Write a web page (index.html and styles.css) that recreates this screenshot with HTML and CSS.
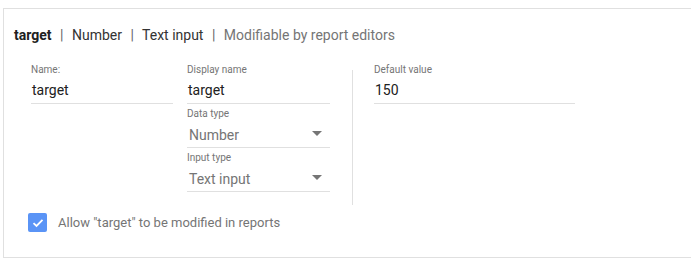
FILE: index.html
```html
<!DOCTYPE html>
<html lang="en">
  <head>
    <meta charset="UTF-8" />
    <meta name="viewport" content="width=device-width, initial-scale=1.0" />
    <title>Parameter</title>
    <link rel="stylesheet" href="styles.css">
  </head>
  <body>
    <div class="card">
      <div class="summary">
        <b>target</b>
        <span class="sep">|</span>
        <span>Number</span>
        <span class="sep">|</span>
        <span>Text input</span>
        <span class="sep">|</span>
        <span class="muted">Modifiable by report editors</span>
      </div>

      <div class="fields">
        <div class="col col-name">
          <div class="field">
            <div class="label">Name:</div>
            <div class="value">target</div>
          </div>
        </div>

        <div class="col col-display">
          <div class="field">
            <div class="label">Display name</div>
            <div class="value">target</div>
          </div>
          <div class="field">
            <div class="label">Data type</div>
            <div class="value select">Number<span class="arrow"></span></div>
          </div>
          <div class="field">
            <div class="label">Input type</div>
            <div class="value select">Text input<span class="arrow"></span></div>
          </div>
        </div>

        <div class="divider"></div>

        <div class="col col-default">
          <div class="field">
            <div class="label">Default value</div>
            <div class="value">150</div>
          </div>
        </div>
      </div>

      <label class="check">
        <span class="box">
          <svg width="12" height="10" viewBox="0 0 12 10">
            <path d="M1.5 5.2 L4.5 8 L10.5 1.8" fill="none" stroke="#fff" stroke-width="1.8" />
          </svg>
        </span>
        Allow "target" to be modified in reports
      </label>
    </div>
  </body>
</html>
```

FILE: styles.css
```css
* {
  margin: 0;
  padding: 0;
  box-sizing: border-box;
  font-family: Roboto, "Liberation Sans", Arial, sans-serif;
}
body {
  background: #fff;
  overflow: hidden;
}
.card {
  margin: 8px 0 0 3px;
  width: 720px;
  height: 250px;
  border: 1px solid #e0e0e0;
  border-right: none;
  padding: 17px 0 0 10px;
}
.summary {
  font-size: 14px;
  line-height: 18px;
  color: #333;
}
.summary b {
  color: #212121;
}
.summary .sep {
  color: #666;
  margin: 0 5px;
}
.summary .muted {
  color: #757575;
}
.fields {
  display: flex;
  margin-top: 20px;
  padding-left: 17px;
}
.col {
  display: flex;
  flex-direction: column;
  gap: 4px;
}
.col-name {
  width: 142px;
}
.col-display {
  width: 143px;
  margin-left: 14px;
}
.col-default {
  width: 201px;
}
.divider {
  width: 1px;
  background: #e0e0e0;
  margin: 6px 21px 0 22px;
  height: 135px;
}
.label {
  font-size: 10px;
  line-height: 12px;
  color: #757575;
}
.value {
  font-size: 14px;
  line-height: 20px;
  height: 28px;
  padding: 4px 0 0 1px;
  color: #212121;
  border-bottom: 1px solid #e0e0e0;
}
.select {
  color: #757575;
  display: flex;
  justify-content: space-between;
  padding: 5px 0 0 2px;
}
.arrow {
  width: 0;
  height: 0;
  border-left: 5px solid transparent;
  border-right: 5px solid transparent;
  border-top: 5px solid #757575;
  margin: 6px 8px 0 0;
}
.check {
  display: flex;
  align-items: center;
  gap: 11px;
  margin-top: 8px;
  margin-left: 14px;
  font-size: 13px;
  color: #757575;
}
.box {
  width: 19px;
  height: 19px;
  border-radius: 2px;
  background: #5a94f6;
  display: flex;
  align-items: center;
  justify-content: center;
}
```
